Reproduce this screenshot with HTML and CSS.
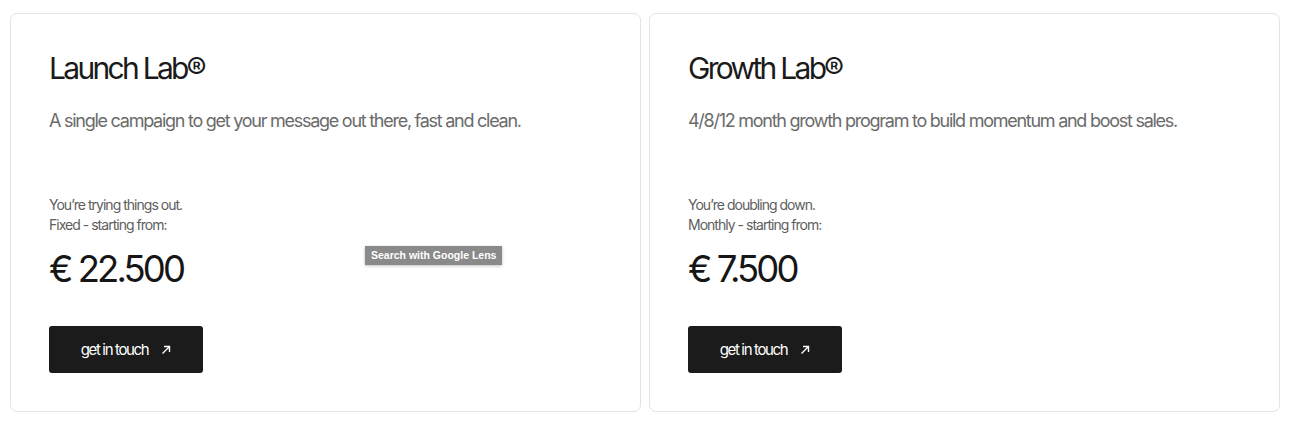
FILE: index.html
```html
<!DOCTYPE html>
<html lang="en">
<head>
<meta charset="utf-8">
<link rel="stylesheet" href="styles.css">
</head>
<body>
<div class="grid">
  <section class="card">
    <h2 class="title">Launch Lab®</h2>
    <p class="desc">A single campaign to get your message out there, fast and clean.</p>
    <div class="meta">
      <p class="note">You’re trying things out.<br>Fixed - starting from:</p>
      <p class="price">€ 22.500</p>
    </div>
    <a class="btn" href="#"><span>get in touch</span><svg class="arrow" viewBox="0 0 10 10" width="10" height="10"><path d="M1.5 8.5 L8.5 1.5 M3 1.5 H8.5 V7" fill="none" stroke="#fff" stroke-width="1.4"/></svg></a>
    <div class="lens">Search with Google Lens</div>
  </section>
  <section class="card">
    <h2 class="title">Growth Lab®</h2>
    <p class="desc">4/8/12 month growth program to build momentum and boost sales.</p>
    <div class="meta">
      <p class="note">You’re doubling down.<br>Monthly - starting from:</p>
      <p class="price">€ 7.500</p>
    </div>
    <a class="btn" href="#"><span>get in touch</span><svg class="arrow" viewBox="0 0 10 10" width="10" height="10"><path d="M1.5 8.5 L8.5 1.5 M3 1.5 H8.5 V7" fill="none" stroke="#fff" stroke-width="1.4"/></svg></a>
  </section>
</div>
</body>
</html>
```
FILE: styles.css
```css
* { box-sizing: border-box; }
html, body { margin: 0; padding: 0; background: #fff; }
body {
  font-family: Inter, "Liberation Sans", sans-serif;
  color: #1a1a1a;
  padding: 13px 12px 0 10px;
}
.grid {
  display: grid;
  grid-template-columns: 631px 631px;
  gap: 8px;
}
.card {
  position: relative;
  border: 1px solid #e3e3e3;
  border-radius: 7px;
  height: 399px;
  padding: 36px 38px 38px;
  display: flex;
  flex-direction: column;
  align-items: flex-start;
}
.title {
  margin: 0;
  font-weight: 400;
  font-size: 30px;
  line-height: 36px;
  letter-spacing: -0.09em;
}
.desc {
  margin: 22px 0 0;
  font-size: 18px;
  line-height: 26px;
  color: #6b6b6b;
  letter-spacing: -0.07em;
}
.meta { margin-top: auto; }
.note {
  margin: 0;
  font-size: 14px;
  line-height: 20px;
  color: #5e5e5e;
  letter-spacing: -0.07em;
}
.price {
  margin: 12px 0 0;
  font-size: 36.5px;
  line-height: 44px;
  letter-spacing: -0.08em;
  color: #161616;
}
.btn {
  margin-top: 35px;
  display: flex;
  align-items: center;
  justify-content: center;
  width: 154px;
  height: 47px;
  background: #1b1b1b;
  color: #fff;
  border-radius: 3px;
  text-decoration: none;
  font-size: 15px;
  letter-spacing: -0.09em;
  gap: 13px;
}
.arrow { display: block; }
.lens {
  position: absolute;
  left: 354px;
  top: 232px;
  background: #8a8a8a;
  color: #fff;
  font-family: "Liberation Sans", Arial, sans-serif;
  font-weight: 700;
  font-size: 10.5px;
  padding: 3px 6px;
  line-height: 13px;
  box-shadow: 0 1px 3px rgba(0,0,0,0.25);
}
```
